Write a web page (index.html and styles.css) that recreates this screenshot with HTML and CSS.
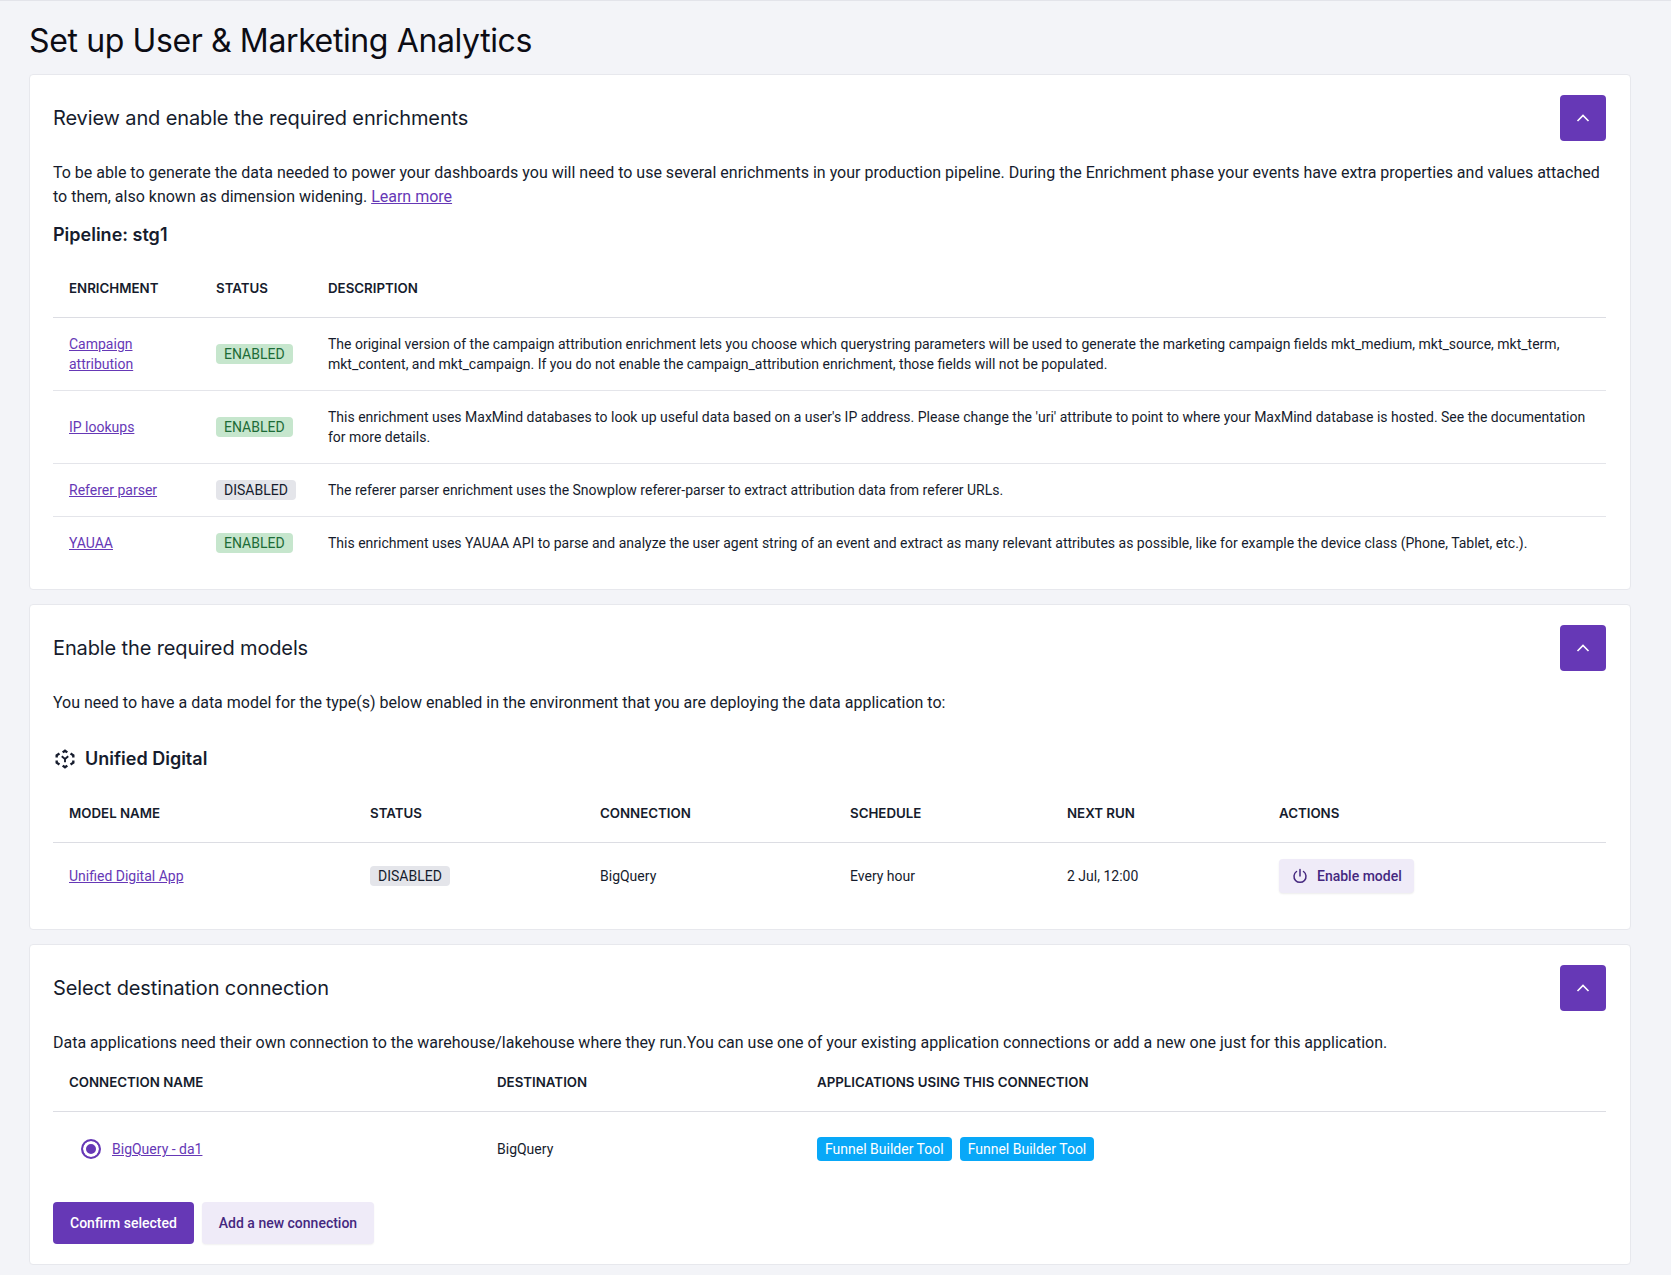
FILE: index.html
```html
<!DOCTYPE html>
<html lang="en">
<head>
    <meta charset="UTF-8">
    <title>Set up User &amp; Marketing Analytics</title>
    <link rel="stylesheet" href="styles.css">
</head>
<body>

<h1 class="page-title">Set up User &amp; Marketing Analytics</h1>

<section class="card">
    <div class="card-head">
        <h2>Review and enable the required enrichments</h2>
        <button class="collapse"><svg width="14" height="10" viewBox="0 0 14 10"><path d="M1.500 8 7 2.500 12.500 8" fill="none" stroke="#fff" stroke-width="1.6"/></svg></button>
    </div>
    <p class="intro">To be able to generate the data needed to power your dashboards you will need to use several enrichments in your production pipeline. During the Enrichment phase your events have extra properties and values attached to them, also known as dimension widening. <a href="#">Learn more</a></p>
    <h3 class="pipeline">Pipeline: stg1</h3>
    <table class="enrich">
        <thead><tr><th class="c-name">ENRICHMENT</th><th class="c-status">STATUS</th><th>DESCRIPTION</th></tr></thead>
        <tbody>
            <tr class="tall"><td><a href="#">Campaign attribution</a></td><td><span class="badge on">ENABLED</span></td><td>The original version of the campaign attribution enrichment lets you choose which querystring parameters will be used to generate the marketing campaign fields mkt_medium, mkt_source, mkt_term, mkt_content, and mkt_campaign. If you do not enable the campaign_attribution enrichment, those fields will not be populated.</td></tr>
            <tr class="tall"><td><a href="#">IP lookups</a></td><td><span class="badge on">ENABLED</span></td><td>This enrichment uses MaxMind databases to look up useful data based on a user's IP address. Please change the 'uri' attribute to point to where your MaxMind database is hosted. See the documentation for more details.</td></tr>
            <tr><td><a href="#">Referer parser</a></td><td><span class="badge off">DISABLED</span></td><td>The referer parser enrichment uses the Snowplow referer-parser to extract attribution data from referer URLs.</td></tr>
            <tr><td><a href="#">YAUAA</a></td><td><span class="badge on">ENABLED</span></td><td>This enrichment uses YAUAA API to parse and analyze the user agent string of an event and extract as many relevant attributes as possible, like for example the device class (Phone, Tablet, etc.).</td></tr>
        </tbody>
    </table>
</section>

<section class="card">
    <div class="card-head">
        <h2>Enable the required models</h2>
        <button class="collapse"><svg width="14" height="10" viewBox="0 0 14 10"><path d="M1.500 8 7 2.500 12.500 8" fill="none" stroke="#fff" stroke-width="1.6"/></svg></button>
    </div>
    <p class="intro">You need to have a data model for the type(s) below enabled in the environment that you are deploying the data application to:</p>
    <h3 class="model-title">
        <svg width="24" height="24" viewBox="-3 -3 26 26" fill="none" stroke="#161c2d" stroke-width="2.6"><path d="M7.500 2.800 10 1 12.500 2.800M16 4 19 6V8.500M19 11.500V14L16 16M12.500 17.200 10 19 7.500 17.200M4 16 1 14V11.500M1 8.500V6L4 4"/><path d="M6.500 7 10 10 13.500 7M10 10V13.500" stroke-width="2"/></svg>
        Unified Digital
    </h3>
    <table class="models">
        <thead><tr><th class="m1">MODEL NAME</th><th class="m2">STATUS</th><th class="m3">CONNECTION</th><th class="m4">SCHEDULE</th><th class="m5">NEXT RUN</th><th>ACTIONS</th></tr></thead>
        <tbody>
            <tr><td><a href="#">Unified Digital App</a></td><td><span class="badge off">DISABLED</span></td><td>BigQuery</td><td>Every hour</td><td>2 Jul, 12:00</td><td><button class="btn-enable"><svg width="16" height="16" viewBox="0 0 16 16" fill="none" stroke="#45287f" stroke-width="1.500" stroke-linecap="round"><path d="M8 1.500v6.500M4.500 3.500a6 6 0 1 0 7 0"/></svg>Enable model</button></td></tr>
        </tbody>
    </table>
</section>

<section class="card">
    <div class="card-head">
        <h2>Select destination connection</h2>
        <button class="collapse"><svg width="14" height="10" viewBox="0 0 14 10"><path d="M1.500 8 7 2.500 12.500 8" fill="none" stroke="#fff" stroke-width="1.6"/></svg></button>
    </div>
    <p class="intro">Data applications need their own connection to the warehouse/lakehouse where they run.You can use one of your existing application connections or add a new one just for this application.</p>
    <table class="conns">
        <thead><tr><th class="k1">CONNECTION NAME</th><th class="k2">DESTINATION</th><th>APPLICATIONS USING THIS CONNECTION</th></tr></thead>
        <tbody>
            <tr>
                <td><span class="radio-cell"><span class="radio"></span><a href="#">BigQuery - da1</a></span></td>
                <td>BigQuery</td>
                <td><span class="tag">Funnel Builder Tool</span><span class="tag">Funnel Builder Tool</span></td>
            </tr>
        </tbody>
    </table>
    <div class="actions">
        <button class="btn-primary">Confirm selected</button>
        <button class="btn-soft">Add a new connection</button>
    </div>
</section>

</body>
</html>
```

FILE: styles.css
```css
/* page */
body {
    margin: 0;
    padding: 0 40px 0 29px;
    background: #f3f4f8;
    font-family: Roboto, "Liberation Sans", sans-serif;
    color: #161c2d;
    border-top: 1px solid #e3e4ea;
}
.page-title {
    font-family: Inter, sans-serif;
    font-size: 32px;
    font-weight: 400;
    line-height: 40px;
    letter-spacing: -0.38px;
    color: #0c0c14;
    margin: 20px 0 13px;
}

/* cards */
.card {
    background: #fff;
    border: 1px solid #e7e8ed;
    border-radius: 4px;
    padding: 20px 24px 20px 23px;
    margin-bottom: 14px;
}
.card-head {
    display: flex;
    justify-content: space-between;
    align-items: center;
    margin-bottom: 20px;
}
.card-head h2 {
    font-family: Inter, sans-serif;
    font-size: 20px;
    font-weight: 400;
    letter-spacing: -0.13px;
    margin: 0;
}
.collapse {
    width: 46px;
    height: 46px;
    background: #6638b6;
    border: none;
    border-radius: 4px;
    display: flex;
    align-items: center;
    justify-content: center;
}
.intro {
    font-size: 16px;
    line-height: 24px;
    margin: 0;
}
a {
    color: #6638b6;
}
.pipeline {
    font-family: Inter, sans-serif;
    font-size: 18px;
    font-weight: 600;
    margin: 14px 0 0;
    line-height: 24px;
}
.model-title {
    display: flex;
    align-items: center;
    gap: 8px;
    font-family: Inter, sans-serif;
    font-size: 18px;
    font-weight: 600;
    margin: 32px 0 0;
    line-height: 24px;
}

/* tables */
table {
    width: 100%;
    border-collapse: collapse;
    font-size: 14px;
    line-height: 20px;
}
.enrich { margin-top: 12px; }
.models { margin-top: 13px; }
.conns { margin-top: -2px; }
th {
    text-align: left;
    font-family: Inter, sans-serif;
    font-size: 13.3px;
    font-weight: 600;
    padding: 0 16px;
    height: 58px;
    border-bottom: 1px solid #dcdde3;
}
td {
    padding: 8px 16px;
    height: 36px;
    border-bottom: 1px solid #e4e5ea;
}
tbody tr:last-child td {
    border-bottom: none;
}
.c-name { width: 115px; }
.c-status { width: 80px; }
.m1 { width: 269px; }
.m2 { width: 198px; }
.m3 { width: 218px; }
.m4 { width: 185px; }
.m5 { width: 180px; }
.k1 { width: 396px; }
.k2 { width: 288px; }
.conns td { height: 58px; }
.models td { height: 49px; padding-top: 8px; padding-bottom: 9px; }
.tall td { height: 56px; }

/* badges and tags */
.badge {
    display: inline-block;
    font-size: 14px;
    line-height: 20px;
    padding: 0 8px;
    border-radius: 4px;
    white-space: nowrap;
}
.badge.on { background: #c6e6cd; color: #1d6b37; }
.badge.off { background: #e4e5ea; color: #161c2d; }
.tag {
    display: inline-block;
    background: #08a8f8;
    color: #fff;
    line-height: 24px;
    padding: 0 8px;
    border-radius: 4px;
    margin-right: 8px;
}

/* radio */
.radio-cell {
    display: flex;
    align-items: center;
    gap: 11px;
    padding-left: 12px;
}
.radio {
    width: 20px;
    height: 20px;
    box-sizing: border-box;
    border: 2px solid #6638b6;
    border-radius: 50%;
    background: #6638b6;
    box-shadow: inset 0 0 0 3px #fff;
}

/* buttons */
button {
    font-family: Roboto, sans-serif;
    cursor: pointer;
}
.btn-enable {
    display: inline-flex;
    align-items: center;
    gap: 9px;
    height: 34px;
    padding: 0 12px 0 13px;
    background: #efebf8;
    border: none;
    border-radius: 4px;
    color: #45287f;
    font-size: 14px;
    font-weight: 500;
    box-shadow: 0 1px 2px rgba(0, 0, 0, 0.08);
}
.actions {
    display: flex;
    gap: 8px;
    margin-top: 16px;
}
.btn-primary, .btn-soft {
    height: 42px;
    padding: 0 17px;
    border: none;
    border-radius: 4px;
    font-size: 14px;
    font-weight: 500;
}
.btn-primary { background: #6638b6; color: #fff; }
.btn-soft {
    background: #efebf8;
    color: #45287f;
    box-shadow: 0 1px 2px rgba(0, 0, 0, 0.06);
}
```
